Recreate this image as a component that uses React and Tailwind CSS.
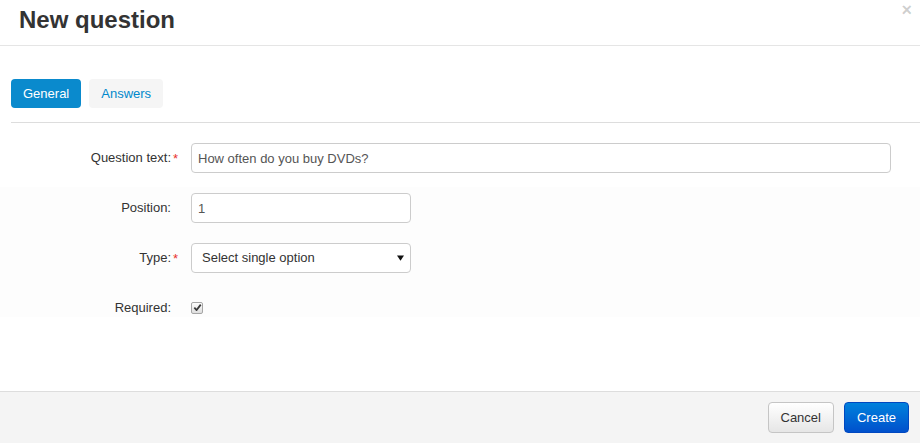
import { useState } from 'react';

const font = { fontFamily: '"Liberation Sans", Arial, sans-serif' };

function FieldRow({ label, required, children, className = '' }) {
  return (
    <div className={`grid grid-cols-[171px_20px_1fr] items-center ${className}`}>
      <label className="text-right text-[13px] text-[#333]">{label}</label>
      <span className="pl-[2px] text-[13px] leading-none text-[#e9322d]">{required ? '*' : ''}</span>
      <div className="flex items-center">{children}</div>
    </div>
  );
}

function Checkbox({ checked }) {
  return (
    <span className="flex h-[12px] w-[12px] items-center justify-center rounded-[2px] border border-[#a6a6a6] bg-gradient-to-b from-[#fdfdfd] to-[#dedede]">
      {checked && (
        <svg viewBox="0 0 10 10" className="h-[9px] w-[9px]">
          <path d="M1.5 5.2 L4 7.8 L8.6 1.8" fill="none" stroke="#3a3a3a" strokeWidth="2" strokeLinejoin="round" />
        </svg>
      )}
    </span>
  );
}

export default function App() {
  const [tab, setTab] = useState('general');

  return (
    <div className="flex h-[443px] w-[920px] flex-col bg-white" style={font}>
      <div className="relative flex h-[46px] items-center border-b border-[#e5e5e5] pl-[19px]">
        <h3 className="text-[24px] font-bold leading-none text-[#333] -mt-[6px]">New question</h3>
        <button className="absolute right-[8px] top-[1px] text-[18px] font-bold leading-[18px] text-black/20">×</button>
      </div>

      <div className="px-[11px] pt-[33px]">
        <div className="flex gap-[8px]">
          <button
            onClick={() => setTab('general')}
            className={`h-[29px] rounded-[4px] px-[12px] text-[13px] ${tab === 'general' ? 'bg-[#0a8acd] text-white' : 'bg-[#f5f5f5] text-[#0088cc]'}`}
          >
            General
          </button>
          <button
            onClick={() => setTab('answers')}
            className={`h-[29px] rounded-[4px] px-[12px] text-[13px] ${tab === 'answers' ? 'bg-[#0a8acd] text-white' : 'bg-[#f5f5f5] text-[#0088cc]'}`}
          >
            Answers
          </button>
        </div>
        <div className="-mr-[11px] mt-[14px] border-t border-[#dddddd]" />
      </div>

      <div className="pt-[20px]">
        <FieldRow label="Question text:" required>
          <input
            defaultValue="How often do you buy DVDs?"
            className="mr-[29px] h-[30px] w-full rounded-[4px] border border-[#cccccc] bg-white px-[6px] text-[13px] text-[#555] outline-none"
          />
        </FieldRow>

        <div className="mt-[14px] bg-[#fdfdfd] pt-[6px] pb-[1px]">
          <FieldRow label="Position:">
            <input
              defaultValue="1"
              className="h-[30px] w-[220px] rounded-[4px] border border-[#cccccc] bg-white px-[6px] text-[13px] text-[#555] outline-none"
            />
          </FieldRow>

          <FieldRow label="Type:" required className="mt-[20px]">
            <div className="flex h-[30px] w-[220px] items-center justify-between rounded-[4px] border border-[#cccccc] bg-white pl-[10px] pr-[6px] text-[13px] text-[#333]">
              <span>Select single option</span>
              <svg viewBox="0 0 8 6" className="h-[6px] w-[7px]">
                <path d="M0 0 H8 L4 6 Z" fill="#111" />
              </svg>
            </div>
          </FieldRow>

          <FieldRow label="Required:" className="mt-[25px] h-[18px]">
            <Checkbox checked />
          </FieldRow>
        </div>
      </div>

      <div className="mt-auto flex h-[52px] items-center justify-end gap-[10px] border-t border-[#dddddd] bg-[#f4f4f4] pr-[11px]">
        <button className="h-[31px] rounded-[4px] border border-[#c5c5c5] bg-gradient-to-b from-white to-[#e6e6e6] px-[12px] text-[13px] text-[#333]">
          Cancel
        </button>
        <button className="h-[31px] rounded-[4px] border border-[#0048c0] bg-gradient-to-b from-[#0081dc] to-[#0050cc] px-[12px] text-[13px] text-white">
          Create
        </button>
      </div>
    </div>
  );
}
